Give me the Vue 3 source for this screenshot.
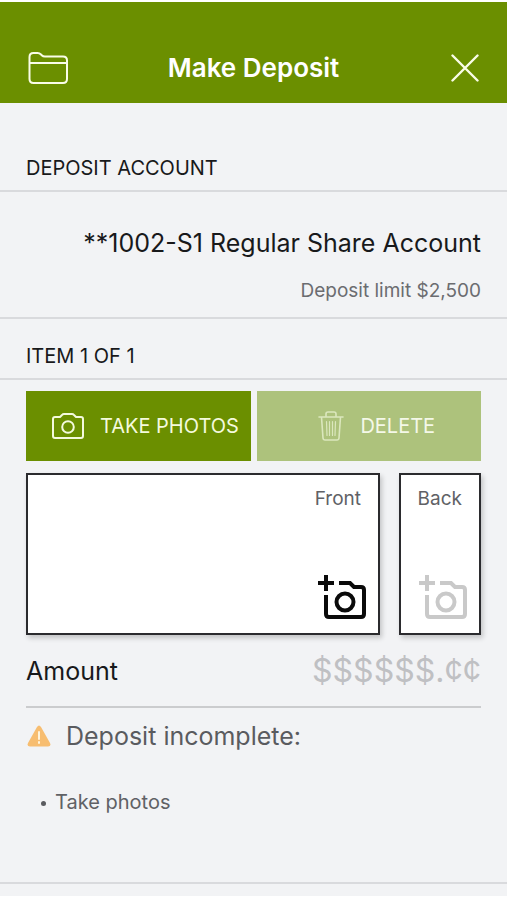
<script setup>
import { ref } from 'vue'

const amount = ref('')
const account = { name: '**1002-S1 Regular Share Account', limit: 'Deposit limit $2,500' }
const missing = ['Take photos']
</script>

<template>
  <div class="screen">
    <header class="bar">
      <button class="icon-button" type="button" aria-label="Deposit history">
        <svg width="40" height="32" viewBox="0 0 40 32" fill="none" stroke="currentColor" stroke-width="2" stroke-linejoin="round">
          <path d="M1.500 5Q1.500 1 5.500 1H9.500Q11.500 1 13 2.500L14 3.500Q15 4.500 17 4.500H35Q39 4.500 39 8.500V27Q39 31 35 31H5.500Q1.500 31 1.500 27Z" />
          <path d="M1.500 11H39" />
        </svg>
      </button>
      <h1>Make Deposit</h1>
      <button class="icon-button close" type="button" aria-label="Close">
        <svg width="28" height="28" viewBox="0 0 28 28" fill="none" stroke="currentColor" stroke-width="2.400" stroke-linecap="round">
          <path d="M1.500 1.500L26.500 26.500M26.500 1.500L1.500 26.500" />
        </svg>
      </button>
    </header>

    <main>
      <section>
        <h2 class="first">DEPOSIT ACCOUNT</h2>
        <div class="account">
          <p class="account-name">{{ account.name }}</p>
          <p class="limit">{{ account.limit }}</p>
        </div>
      </section>

      <section>
        <h2>ITEM 1 OF 1</h2>
        <div class="item">
          <div class="actions">
            <button class="action take" type="button">
              <svg width="32" height="26" viewBox="0 0 32 26" fill="none" stroke="currentColor" stroke-width="2" stroke-linejoin="round">
                <path d="M3 4H8L10 2Q10.800 1 12 1H20Q21.200 1 22 2L24 4H29Q31 4 31 6V23Q31 25 29 25H3Q1 25 1 23V6Q1 4 3 4Z" />
                <circle cx="16" cy="14" r="5.800" />
              </svg>
              <span>TAKE PHOTOS</span>
            </button>
            <button class="action delete" type="button" disabled>
              <svg width="26" height="30" viewBox="0 0 26 30" fill="none" stroke="currentColor" stroke-width="1.600" stroke-linecap="round" stroke-linejoin="round">
                <path d="M1 6H25M8 6V3Q8 1 10 1H16Q18 1 18 3V6M3.500 6L5 27Q5.200 29 7 29H19Q20.800 29 21 27L22.500 6" />
                <path d="M8.500 10.500L9 24.500M11.500 10.500V24.500M14.500 10.500V24.500M17.500 10.500L17 24.500" stroke-width="1.200" />
              </svg>
              <span>DELETE</span>
            </button>
          </div>

          <div class="photos">
            <button class="photo front" type="button">
              <span>Front</span>
              <svg width="50" height="46" viewBox="0 0 50 46" fill="none" stroke="currentColor" stroke-width="4">
                <path d="M9 1V17M1 9H17" />
                <path d="M22 9H33L37 13H44Q47 13 47 16V40Q47 43 44 43H12Q9 43 9 40V21" />
                <circle cx="28" cy="28" r="8.500" />
              </svg>
            </button>
            <button class="photo back" type="button" disabled>
              <span>Back</span>
              <svg width="50" height="46" viewBox="0 0 50 46" fill="none" stroke="currentColor" stroke-width="4">
                <path d="M9 1V17M1 9H17" />
                <path d="M22 9H33L37 13H44Q47 13 47 16V40Q47 43 44 43H12Q9 43 9 40V21" />
                <circle cx="28" cy="28" r="8.500" />
              </svg>
            </button>
          </div>

          <div class="amount">
            <label for="amount">Amount</label>
            <input id="amount" v-model="amount" type="text" inputmode="decimal" placeholder="$$$$$$.¢¢" />
          </div>

          <div class="status">
            <svg width="24" height="22" viewBox="0 0 24 22">
              <path d="M10 2Q12 -1 14 2L23 18Q24.500 21.500 21 21.500H3Q-.5 21.500 1 18Z" fill="#f7bd70" />
              <path d="M12 7V14M12 17V18" stroke="#fff4dc" stroke-width="2" stroke-linecap="round" />
            </svg>
            <p>Deposit incomplete:</p>
          </div>
          <ul>
            <li v-for="entry in missing" :key="entry">{{ entry }}</li>
          </ul>
        </div>
      </section>
    </main>
  </div>
</template>

<style>
body {
  margin: 0;
  background: #fff;
}
</style>

<style scoped>
.screen {
  box-sizing: border-box;
  padding: 2px 0 3px;
  font-family: Inter, "Liberation Sans", sans-serif;
  color: #18191b;
}
h1,
h2,
p,
ul {
  margin: 0;
  padding: 0;
  font-weight: 400;
}
button,
input {
  font-family: inherit;
  margin: 0;
}
svg {
  display: block;
  flex: none;
}
.bar {
  display: grid;
  grid-template-columns: 40px 1fr 40px;
  align-items: center;
  padding: 46px 28px 15px;
  background: #6b8f00;
  color: #fff;
}
.bar h1 {
  font-size: 26px;
  line-height: 40px;
  font-weight: 600;
  text-align: center;
}
.icon-button {
  display: flex;
  height: 40px;
  padding: 0;
  align-items: center;
  justify-content: center;
  border: 0;
  background: none;
  color: #fafde8;
}
.icon-button.close {
  justify-content: flex-end;
}
main {
  background: #f2f3f5;
  padding-bottom: 12px;
}
h2 {
  padding: 25px 26px 9px;
  border-bottom: 2px solid #d9dadd;
  font-size: 20px;
  line-height: 25px;
}
h2.first {
  padding-top: 53px;
}
.account {
  padding: 31px 26px 13px;
  border-bottom: 2px solid #d9dadd;
  text-align: right;
}
.account-name {
  font-size: 25px;
  line-height: 40px;
}
.limit {
  padding-top: 15px;
  font-size: 19px;
  line-height: 26px;
  color: #6b6c70;
}
.item {
  padding: 11px 26px 67px;
  border-bottom: 2px solid #d9dadd;
}
.actions {
  display: grid;
  grid-template-columns: 1fr 1fr;
  gap: 6px;
}
.action {
  display: flex;
  height: 70px;
  padding: 0 8px 0 26px;
  align-items: center;
  gap: 16px;
  border: 0;
  font-size: 20px;
  white-space: nowrap;
  color: #f4fadd;
  background: #6b8f00;
}
.action.delete {
  padding: 0 0 0 16px;
  justify-content: center;
  background: #adc27c;
  color: #f4f8e8;
}
.delete svg {
  color: #dbe7bd;
}
.photos {
  display: grid;
  grid-template-columns: 1fr 82px;
  gap: 19px;
  padding-top: 12px;
}
.photo {
  display: flex;
  box-sizing: border-box;
  height: 162px;
  padding: 14px 11px 13px 0;
  flex-direction: column;
  align-items: flex-end;
  justify-content: space-between;
  border: 2px solid #2b2b2e;
  background: #fff;
  box-shadow: 2px 3px 5px #0003;
  font-size: 19px;
  line-height: 20px;
  color: #606165;
}
.photo span {
  padding-right: 6px;
}
.photo.front svg {
  color: #0a0a0a;
}
.photo.back svg {
  color: #c9c9c9;
}
.photo.back span {
  color: #606165;
}
.amount {
  display: flex;
  align-items: center;
  justify-content: space-between;
  height: 71px;
  border-bottom: 2px solid #cbccce;
}
.amount label {
  font-size: 25px;
}
.amount input {
  min-width: 0;
  flex: 1;
  padding: 0;
  border: 0;
  background: none;
  font-size: 32px;
  line-height: 40px;
  text-align: right;
  color: #18191b;
}
.amount input::placeholder {
  color: #bfc0c3;
  opacity: 1;
}
.status {
  display: flex;
  align-items: center;
  gap: 15px;
  padding: 8px 0 0 1px;
}
.status p {
  font-size: 25px;
  line-height: 40px;
  color: #5a5b5f;
}
ul {
  padding: 33px 0 0 28px;
  list-style: none;
  font-size: 20px;
  line-height: 26px;
  color: #606165;
}
li {
  display: flex;
  align-items: center;
}
li::before {
  content: "";
  width: 5px;
  height: 5px;
  margin: 2px 9px 0 -13px;
  border-radius: 50%;
  background: #5a5b5f;
}
</style>
